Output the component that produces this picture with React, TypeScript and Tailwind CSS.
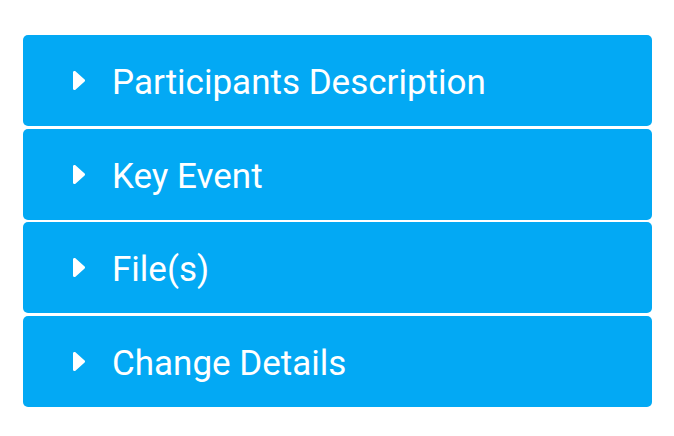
const items = ['Participants Description', 'Key Event', 'File(s)', 'Change Details'];

function Caret() {
  return (
    <svg viewBox="0 108 168 296" preserveAspectRatio="none" className="w-[12px] h-[19px]" fill="currentColor">
      <path d="M0 384.662V127.338c0-17.818 21.543-26.741 34.142-14.142l128.662 128.662c7.81 7.81 7.81 20.474 0 28.284L34.142 398.804C21.543 411.404 0 402.48 0 384.662z" />
    </svg>
  );
}

export default function App() {
  return (
    <div className="w-[674px] h-[436px] bg-white pt-[35px] px-[23px]" style={{ fontFamily: 'Roboto, sans-serif' }}>
      <div className="flex flex-col gap-[2.67px] w-[629px]">
        {items.map(label => (
          <div key={label} className="h-[91px] rounded-[5px] bg-[#03a9f4] text-white flex items-center pl-[50px]">
            <Caret />
            <span className="ml-[27px] pt-[4px] text-[35px] leading-none">{label}</span>
          </div>
        ))}
      </div>
    </div>
  );
}
